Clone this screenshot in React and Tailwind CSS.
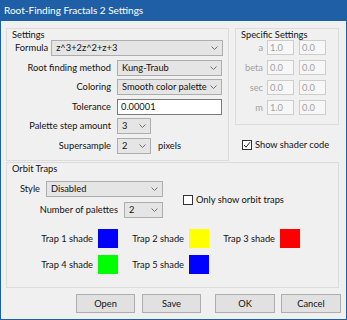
const Chevron = () => (
  <svg width="7" height="4" viewBox="0 0 7 4" className="shrink-0">
    <path d="M0.5 0.5 L3.5 3.5 L6.5 0.5" fill="none" stroke="#707070" strokeWidth="1" />
  </svg>
);

const Combo = ({ value, className = "" }) => (
  <div className={`flex items-center h-[16px] border border-[#adadad] bg-[#e5e5e5] pl-[4px] pr-[4px] ${className}`}>
    <span className="flex-1 whitespace-nowrap overflow-hidden">{value}</span>
    <Chevron />
  </div>
);

const Group = ({ title, className = "", children }) => (
  <div className={`border border-[#dcdcdc] ${className}`}>
    <div className="pl-[5px] h-[11px] leading-[11px]">{title}</div>
    {children}
  </div>
);

const CheckBox = ({ checked, label }) => (
  <div className="flex items-center gap-[3px] h-[14px]">
    <div className="w-[10px] h-[10px] border border-[#333333] bg-white flex items-center justify-center">
      {checked && (
        <svg width="8" height="8" viewBox="0 0 8 8">
          <path d="M1 4 L3 6.2 L7 1.2" fill="none" stroke="#222" strokeWidth="1" />
        </svg>
      )}
    </div>
    <span>{label}</span>
  </div>
);

const Field = ({ value }) => (
  <div className="w-[27px] h-[15px] border border-[#cccccc] bg-[#f7f7f7] pl-[2px] leading-[13px] text-[#a0a0a0]">
    {value}
  </div>
);

const Button = ({ label, className = "" }) => (
  <button className={`h-[19px] border border-[#adadad] bg-[#e1e1e1] text-center leading-[17px] ${className}`}>
    {label}
  </button>
);

const specific = [
  ["a", "1.0", "0.0"],
  ["beta", "0.0", "0.0"],
  ["sec", "0.0", "0.0"],
  ["m", "1.0", "0.0"],
];

const traps = [
  ["Trap 1 shade", "bg-[#0000ff]"],
  ["Trap 2 shade", "bg-[#ffff00]"],
  ["Trap 3 shade", "bg-[#ff0000]"],
  ["Trap 4 shade", "bg-[#00ff00]"],
  ["Trap 5 shade", "bg-[#0000ff]"],
];

export default function App() {
  return (
    <div
      className="w-[347px] h-[320px] flex flex-col bg-[#1f5fa6] text-[9.3px] text-[#111111]"
      style={{ fontFamily: "Lato, 'Noto Sans', sans-serif" }}
    >
      <div className="h-[21px] flex items-center pl-[4px] text-white text-[10px]">
        Root-Finding Fractals 2 Settings
      </div>
      <div className="flex-1 mx-[1px] mb-[1px] bg-[#f0f0f0] pl-[5px] pr-[7px] pt-[7px] flex flex-col">
        <div className="flex items-start gap-[6px]">
          <Group title="Settings" className="w-[223px] h-[133px]">
            <div className="flex flex-col gap-[3.6px] pr-[5px]">
              <div className="flex items-center pl-[8px] gap-[3px]">
                <span>Formula</span>
                <Combo value="z^3+2z^2+z+3" className="flex-1" />
              </div>
              {[
                ["Root finding method", <Combo value="Kung-Traub" className="w-[105px]" />],
                ["Coloring", <Combo value="Smooth color palette" className="w-[105px]" />],
                [
                  "Tolerance",
                  <div className="w-[105px] h-[16px] border border-[#7a7a7a] bg-white pl-[3px] leading-[14px]">0.00001</div>,
                ],
                ["Palette step amount", <Combo value="3" className="w-[34px]" />],
                [
                  "Supersample",
                  <div className="flex items-center gap-[7px]">
                    <Combo value="2" className="w-[34px]" />
                    <span>pixels</span>
                  </div>,
                ],
              ].map(([label, control]) => (
                <div key={label} className="flex items-center">
                  <span className="w-[104px] text-right">{label}</span>
                  <div className="ml-[6px]">{control}</div>
                </div>
              ))}
            </div>
          </Group>
          <div className="flex flex-col">
            <Group title="Specific Settings" className="w-[104px] h-[97px]">
              <div className="flex flex-col gap-[5px]">
                {specific.map(([label, v1, v2]) => (
                  <div key={label} className="flex items-center">
                    <span className="w-[27px] text-right text-[#a0a0a0]">{label}</span>
                    <div className="ml-[4px] flex gap-[5px]">
                      <Field value={v1} />
                      <Field value={v2} />
                    </div>
                  </div>
                ))}
              </div>
            </Group>
            <div className="mt-[13px] pl-[7px]">
              <CheckBox checked label="Show shader code" />
            </div>
          </div>
        </div>

        <Group title="Orbit Traps" className="mt-[1px] h-[126px]">
          <div className="flex items-center mt-[7px]">
            <div className="w-[156px] flex flex-col items-end gap-[5px]">
              <div className="flex items-center gap-[6px]">
                <span>Style</span>
                <Combo value="Disabled" className="w-[117px]" />
              </div>
              <div className="flex items-center gap-[6px]">
                <span>Number of palettes</span>
                <Combo value="2" className="w-[39px]" />
              </div>
            </div>
            <div className="ml-[20px]">
              <CheckBox label="Only show orbit traps" />
            </div>
          </div>
          <div className="grid grid-cols-[repeat(3,77px)] gap-x-[14px] gap-y-[7px] pl-[34px] mt-[11px]">
            {traps.map(([label, color]) => (
              <div key={label} className="flex items-center gap-[5px]">
                <span className="w-[52px] text-right whitespace-nowrap">{label}</span>
                <div className={`w-[20px] h-[19px] ${color}`} />
              </div>
            ))}
          </div>
        </Group>

        <div className="flex justify-end mt-[6px] -mr-[2px]">
          <Button label="Open" className="w-[59px]" />
          <Button label="Save" className="w-[59px] ml-[7px]" />
          <Button label="OK" className="w-[60px] ml-[14px]" />
          <Button label="Cancel" className="w-[60px] ml-[6px]" />
        </div>
      </div>
    </div>
  );
}
